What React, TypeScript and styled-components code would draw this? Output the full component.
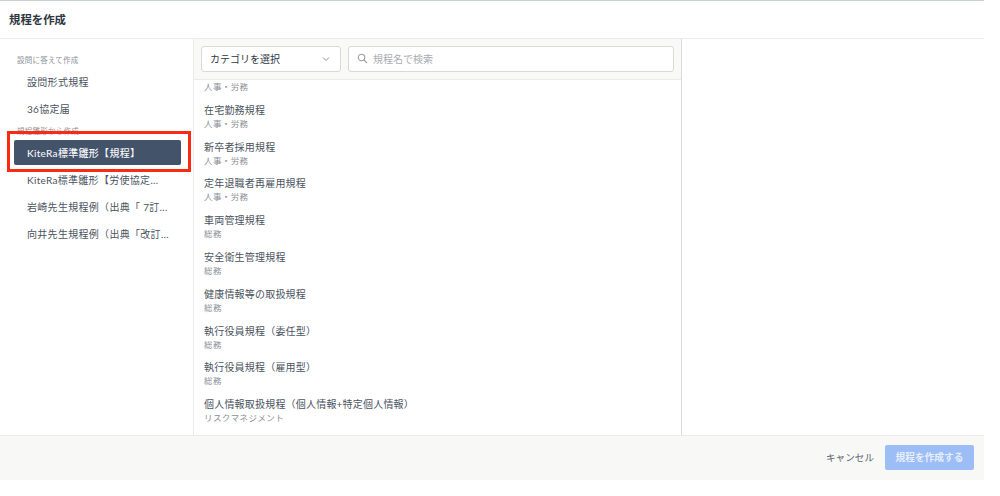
import React from "react";
import styled, { createGlobalStyle } from "styled-components";

const Global = createGlobalStyle`
  html, body { margin: 0; padding: 0; background: #fff; }
  body { font-family: Lato, "Noto Sans CJK JP", sans-serif; width: 1000px; height: 496px; overflow: hidden; }
  * { box-sizing: border-box; }
`;

const Modal = styled.div`
  position: relative;
  width: 984px;
  height: 480px;
  display: flex;
  flex-direction: column;
  background: #fff;
  border-top: 1px solid #c4d2cc;
`;
const Header = styled.header`
  height: 38px;
  flex: none;
  display: flex;
  align-items: center;
  padding: 0 9px 2px;
  border-bottom: 1px solid #ebebe9;
  font-size: 11.4px;
  font-weight: 700;
  color: #2f3742;
`;
const Body = styled.div`
  flex: 1;
  min-height: 0;
  display: flex;
`;
const Sidebar = styled.aside`
  width: 194px;
  flex: none;
  border-right: 1px solid #ebebe9;
  padding: 16px 12px 0 14px;
  display: flex;
  flex-direction: column;
`;
const GroupLabel = styled.div<{ $gap?: number }>`
  font-size: 7.5px;
  line-height: 12px;
  height: 12px;
  letter-spacing: 0.25px;
  color: #8b9097;
  margin-left: 3px;
  margin-top: ${(p) => p.$gap ?? 0}px;
`;
const NavItem = styled.div<{ $active?: boolean }>`
  height: 25px;
  flex: none;
  margin-top: 2px;
  padding: 0 13px;
  display: flex;
  align-items: center;
  border-radius: 2px;
  font-size: 10px;
  letter-spacing: 0.3px;
  white-space: nowrap;
  overflow: hidden;
  color: ${(p) => (p.$active ? "#f4f6f9" : "#4a5360")};
  font-weight: ${(p) => (p.$active ? 500 : 400)};
  background: ${(p) => (p.$active ? "#43536a" : "transparent")};
`;
const Highlight = styled.div`
  position: absolute;
  left: 7px;
  top: 130px;
  width: 184px;
  height: 41px;
  border: 3px solid #fb2a12;
  pointer-events: none;
`;
const Middle = styled.section`
  width: 488px;
  flex: none;
  border-right: 1.5px solid #d9d9d7;
  display: flex;
  flex-direction: column;
  min-height: 0;
`;
const Toolbar = styled.div`
  height: 41px;
  flex: none;
  display: flex;
  gap: 7px;
  align-items: center;
  padding: 0 7px;
  background: #f9f9f7;
  border-bottom: 1px solid #ebebe9;
  position: relative;
  z-index: 1;
`;
const Select = styled.div`
  width: 140px;
  height: 26px;
  flex: none;
  display: flex;
  align-items: center;
  justify-content: space-between;
  padding: 0 9px 1px 8px;
  background: #fff;
  border: 1px solid #d9d9d7;
  border-radius: 3px;
  font-size: 10px;
  color: #2f3742;
`;
const Search = styled.div`
  flex: 1;
  height: 26px;
  display: flex;
  align-items: center;
  gap: 5px;
  padding: 0 8px 1px;
  background: #fff;
  border: 1px solid #d9d9d7;
  border-radius: 3px;
  font-size: 10px;
  color: #a9adb3;
`;
const ListViewport = styled.div`
  flex: 1;
  min-height: 0;
  overflow: hidden;
`;
const List = styled.div`
  margin-top: -15px;
  padding-left: 10px;
`;
const Row = styled.div`
  height: 36.8px;
  padding-top: 1px;
`;
const RowName = styled.div`
  font-size: 10px;
  line-height: 15px;
  letter-spacing: 0.2px;
  color: #4a5360;
`;
const RowSub = styled.div`
  font-size: 8.5px;
  line-height: 12px;
  letter-spacing: 0.4px;
  color: #8b9097;
`;
const Preview = styled.div`
  flex: 1;
`;
const Footer = styled.footer`
  height: 45px;
  flex: none;
  display: flex;
  align-items: center;
  justify-content: flex-end;
  gap: 11px;
  padding: 0 10px 2px 0;
  background: #f8f8f6;
  border-top: 1px solid #ebebe9;
`;
const Cancel = styled.div`
  font-size: 9.6px;
  color: #5b6470;
`;
const Submit = styled.div`
  width: 89px;
  height: 25px;
  display: flex;
  align-items: center;
  justify-content: center;
  background: #9dbdf7;
  border-radius: 2px;
  font-size: 9.7px;
  font-weight: 700;
  color: #e6eefc;
`;

const rows: [string, string][] = [
  ["育児介護休業規程", "人事・労務"],
  ["在宅勤務規程", "人事・労務"],
  ["新卒者採用規程", "人事・労務"],
  ["定年退職者再雇用規程", "人事・労務"],
  ["車両管理規程", "総務"],
  ["安全衛生管理規程", "総務"],
  ["健康情報等の取扱規程", "総務"],
  ["執行役員規程（委任型）", "総務"],
  ["執行役員規程（雇用型）", "総務"],
  ["個人情報取扱規程（個人情報+特定個人情報）", "リスクマネジメント"],
];

export default function App() {
  return (
    <>
      <Global />
      <Modal>
        <Header>規程を作成</Header>
        <Body>
          <Sidebar>
            <GroupLabel>設問に答えて作成</GroupLabel>
            <NavItem>設問形式規程</NavItem>
            <NavItem>36協定届</NavItem>
            <GroupLabel $gap={5}>規程雛形から作成</GroupLabel>
            <NavItem $active>KiteRa標準雛形【規程】</NavItem>
            <NavItem>KiteRa標準雛形【労使協定...</NavItem>
            <NavItem>岩崎先生規程例（出典「 7訂...</NavItem>
            <NavItem>向井先生規程例（出典「改訂...</NavItem>
          </Sidebar>
          <Middle>
            <Toolbar>
              <Select>
                カテゴリを選択
                <svg width="10" height="10" viewBox="0 0 10 10" fill="none" stroke="#8b9097" strokeWidth="1">
                  <path d="M2 3.5 5 6.5 8 3.5" />
                </svg>
              </Select>
              <Search>
                <svg width="11" height="11" viewBox="0 0 11 11" fill="none" stroke="#9a9fa6" strokeWidth="1.1">
                  <circle cx="4.5" cy="4.5" r="3.2" />
                  <path d="M7 7 10 10" />
                </svg>
                規程名で検索
              </Search>
            </Toolbar>
            <ListViewport>
              <List>
                {rows.map(([name, sub]) => (
                  <Row key={name}>
                    <RowName>{name}</RowName>
                    <RowSub>{sub}</RowSub>
                  </Row>
                ))}
              </List>
            </ListViewport>
          </Middle>
          <Preview />
        </Body>
        <Footer>
          <Cancel>キャンセル</Cancel>
          <Submit>規程を作成する</Submit>
        </Footer>
        <Highlight />
      </Modal>
    </>
  );
}
